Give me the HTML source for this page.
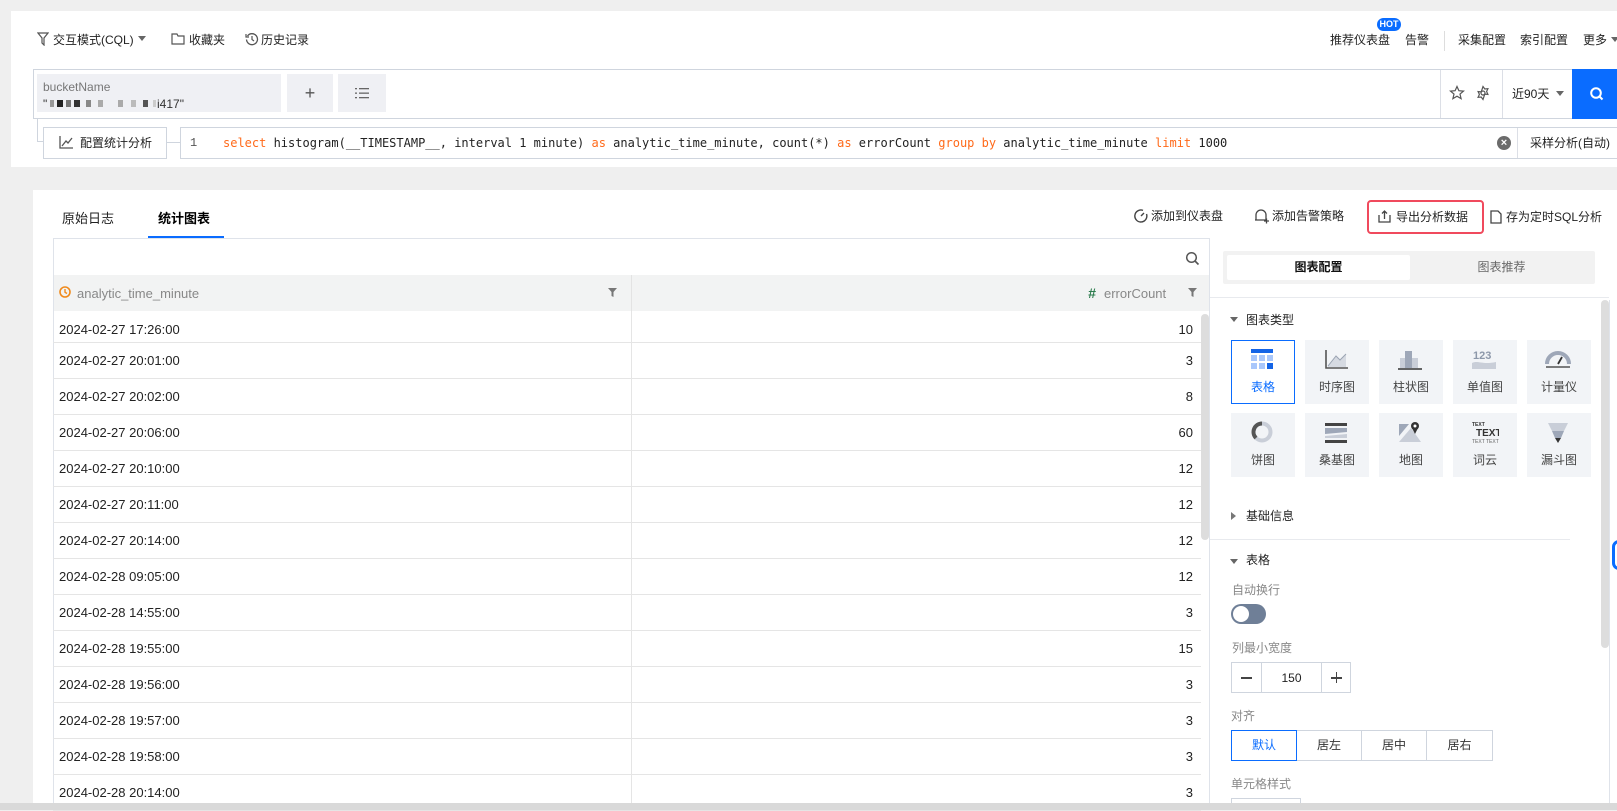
<!DOCTYPE html>
<html><head><meta charset="utf-8"><style>
*{box-sizing:border-box;margin:0;padding:0}
body{width:1617px;height:810px;overflow:hidden;background:#efefef;font-family:"Liberation Sans","Noto Sans CJK SC",sans-serif;font-size:12px;color:#333;position:relative}
.a{position:absolute}
.t{position:absolute;white-space:nowrap;line-height:16px}
.card{background:#fff;position:absolute}
.cell{position:absolute;width:64px;height:64px;background:#f2f4f7;text-align:center}
.cell .lb{position:absolute;left:0;right:0;top:38px;font-size:12px;color:#444}
.cell svg{position:absolute;left:16px;top:7px}
.row{position:absolute;left:53px;width:1148px;height:36px;border-bottom:1px solid #e5e5e5;font-size:13px;color:#222}
.row .d{position:absolute;left:6px;top:10px}
.row .v{position:absolute;right:8px;top:10px}
.row .s{position:absolute;left:578px;top:0;bottom:0;border-left:1px solid #e5e5e5}
</style></head><body>

<div class="card" style="left:11px;top:11px;width:1606px;height:156px"></div>
<svg class="a" style="left:37px;top:32px" width="12" height="14" viewBox="0 0 12 14"><path d="M1 1h10L7 6v7L5 11V6z" fill="none" stroke="#555" stroke-width="1.2"/></svg>
<div class="t" style="left:53px;top:32px;color:#222">交互模式(CQL)</div>
<svg class="a" style="left:138px;top:36px" width="8" height="6"><path d="M0 0h8L4 5z" fill="#666"/></svg>
<svg class="a" style="left:171px;top:33px" width="14" height="12"><path d="M1 1h5l1 2h6v8H1z" fill="none" stroke="#555" stroke-width="1.2"/></svg>
<div class="t" style="left:189px;top:32px;color:#222">收藏夹</div>
<svg class="a" style="left:245px;top:32px" width="14" height="14" viewBox="0 0 14 14"><path d="M2.5 4A5.5 5.5 0 1 1 1.5 7.5" fill="none" stroke="#555" stroke-width="1.3"/><path d="M1 2v3h3" fill="none" stroke="#555" stroke-width="1.2"/><path d="M7 4v3.5l2 1.5" fill="none" stroke="#555" stroke-width="1.2"/></svg>
<div class="t" style="left:261px;top:32px;color:#222">历史记录</div>

<div class="t" style="left:1330px;top:32px;color:#222">推荐仪表盘</div>
<div class="a" style="left:1377px;top:18px;width:24px;height:13px;border-radius:7px;background:#0a6cff;color:#fff;font-size:9px;line-height:13px;text-align:center;font-weight:bold">HOT</div>
<div class="t" style="left:1405px;top:32px;color:#222">告警</div>
<div class="a" style="left:1444px;top:31px;width:1px;height:20px;background:#ddd"></div>
<div class="t" style="left:1458px;top:32px;color:#222">采集配置</div>
<div class="t" style="left:1520px;top:32px;color:#222">索引配置</div>
<div class="t" style="left:1583px;top:32px;color:#222">更多</div>
<svg class="a" style="left:1611px;top:37px" width="8" height="6"><path d="M0 0h8L4 5z" fill="#666"/></svg>

<div class="a" style="left:33px;top:69px;width:1590px;height:50px;border:1px solid #cfd5de;background:#fff"></div>
<div class="a" style="left:37px;top:74px;width:244px;height:38px;background:#eff0f4"></div>
<div class="t" style="left:43px;top:79px;color:#777;font-size:12px">bucketName</div>
<div class="t" style="left:43px;top:96px;color:#333">"</div>
<div class="a" style="left:50px;top:100px;width:4px;height:7px;background:#999"></div>
<div class="a" style="left:57px;top:100px;width:6px;height:7px;background:#222"></div>
<div class="a" style="left:66px;top:100px;width:5px;height:7px;background:#777"></div>
<div class="a" style="left:74px;top:100px;width:6px;height:7px;background:#333"></div>
<div class="a" style="left:86px;top:100px;width:5px;height:7px;background:#888"></div>
<div class="a" style="left:98px;top:100px;width:5px;height:7px;background:#aaa"></div>
<div class="a" style="left:118px;top:100px;width:5px;height:7px;background:#aaa"></div>
<div class="a" style="left:131px;top:100px;width:5px;height:7px;background:#bbb"></div>
<div class="a" style="left:143px;top:100px;width:5px;height:7px;background:#555"></div>
<div class="a" style="left:153px;top:100px;width:3px;height:7px;background:#ccc"></div>
<div class="t" style="left:157px;top:96px;color:#333">i417"</div>
<div class="a" style="left:287px;top:74px;width:46px;height:38px;background:#eff0f4;text-align:center;line-height:38px;font-size:18px;color:#555">+</div>
<div class="a" style="left:338px;top:74px;width:48px;height:38px;background:#eff0f4"></div>
<svg class="a" style="left:355px;top:87px" width="14" height="12"><g fill="#666"><rect x="0" y="1" width="2" height="1.3"/><rect x="4" y="1" width="10" height="1.3"/><rect x="0" y="5.5" width="2" height="1.3"/><rect x="4" y="5.5" width="10" height="1.3"/><rect x="0" y="10" width="2" height="1.3"/><rect x="4" y="10" width="10" height="1.3"/></g></svg>
<div class="a" style="left:1440px;top:70px;width:1px;height:48px;background:#dcdfe6"></div>
<svg class="a" style="left:1449px;top:85px" width="16" height="16" viewBox="0 0 16 16"><path d="M8 1.5l1.9 4.2 4.6.4-3.5 3 1.1 4.5L8 11.2 3.9 13.6 5 9.1 1.5 6.1l4.6-.4z" fill="none" stroke="#555" stroke-width="1.2"/></svg>
<svg class="a" style="left:1475px;top:85px" width="16" height="16" viewBox="0 0 16 16"><path d="M8 1.5l1.8 2.5 3.1-.3-1.3 2.8 1.3 2.9-3.1-.3L8 14.5l-1.8-2.5-3.1.3 1.3-2.9-1.3-2.8 3.1.3z" fill="none" stroke="#555" stroke-width="1.2"/><circle cx="8" cy="8" r="2" fill="none" stroke="#555" stroke-width="1.2"/></svg>
<div class="a" style="left:1502px;top:70px;width:1px;height:48px;background:#dcdfe6"></div>
<div class="t" style="left:1512px;top:86px;color:#222">近90天</div>
<svg class="a" style="left:1556px;top:91px" width="8" height="6"><path d="M0 0h8L4 5z" fill="#666"/></svg>
<div class="a" style="left:1572px;top:69px;width:45px;height:50px;background:#0a6cff"></div>
<svg class="a" style="left:1589px;top:86px" width="16" height="16" viewBox="0 0 16 16"><circle cx="7" cy="7" r="4.8" fill="none" stroke="#fff" stroke-width="2"/><path d="M10.5 10.5l3 3" stroke="#fff" stroke-width="2"/></svg>

<div class="a" style="left:37px;top:119px;width:1px;height:22px;background:#cfd5de"></div>
<div class="a" style="left:37px;top:141px;width:6px;height:1px;background:#cfd5de"></div>
<div class="a" style="left:43px;top:127px;width:124px;height:32px;border:1px solid #cfd5de;background:#fff"></div>
<svg class="a" style="left:59px;top:136px" width="14" height="13"><path d="M1 0v12h13" fill="none" stroke="#555" stroke-width="1.3"/><path d="M3 10l4-5 2 2 4-5" fill="none" stroke="#555" stroke-width="1.3"/></svg>
<div class="t" style="left:80px;top:135px;color:#222">配置统计分析</div>
<div class="a" style="left:167px;top:142px;width:13px;height:1px;background:#cfd5de"></div>
<div class="a" style="left:180px;top:127px;width:1443px;height:32px;border:1px solid #cfd5de;background:#fff"></div>
<div class="t" style="left:190px;top:135px;color:#555;font-family:'Liberation Mono',monospace">1</div>
<div class="t" style="left:223px;top:135px;color:#222;font-family:'DejaVu Sans Mono','Liberation Mono',monospace;font-size:12px"><span style="color:#ff6a1a">select</span> histogram(__TIMESTAMP__, interval 1 minute) <span style="color:#ff6a1a">as</span> analytic_time_minute, count(*) <span style="color:#ff6a1a">as</span> errorCount <span style="color:#ff6a1a">group by</span> analytic_time_minute <span style="color:#ff6a1a">limit</span> 1000</div>
<div class="a" style="left:1497px;top:136px;width:14px;height:14px;border-radius:7px;background:#6b6b6b;color:#fff;font-size:11px;line-height:14px;text-align:center;font-weight:bold">×</div>
<div class="a" style="left:1517px;top:128px;width:1px;height:30px;background:#dcdfe6"></div>
<div class="t" style="left:1530px;top:135px;color:#222">采样分析(自动)</div>

<div class="card" style="left:33px;top:190px;width:1584px;height:613px"></div>
<div class="t" style="left:62px;top:211px;font-size:13px;color:#222">原始日志</div>
<div class="t" style="left:158px;top:211px;font-size:13px;color:#000;font-weight:bold">统计图表</div>
<div class="a" style="left:148px;top:236px;width:76px;height:2px;background:#0a6cff"></div>

<svg class="a" style="left:1134px;top:209px" width="14" height="14" viewBox="0 0 14 14"><path d="M12.5 5A6 6 0 1 1 9 1.4" fill="none" stroke="#444" stroke-width="1.4"/><path d="M7 7l3-3" stroke="#444" stroke-width="1.4"/></svg>
<div class="t" style="left:1151px;top:208px;color:#222">添加到仪表盘</div>
<svg class="a" style="left:1254px;top:208px" width="15" height="16" viewBox="0 0 15 16"><path d="M2 12V7a5 5 0 0 1 10 0v5H1" fill="none" stroke="#444" stroke-width="1.3"/><path d="M10 13h5M12.5 10.5v5" stroke="#444" stroke-width="1.3"/></svg>
<div class="t" style="left:1272px;top:208px;color:#222">添加告警策略</div>
<div class="a" style="left:1367px;top:200px;width:117px;height:34px;border:2px solid #f04a5d;border-radius:4px"></div>
<svg class="a" style="left:1378px;top:210px" width="13" height="13"><path d="M1 5v7h11V5M6.5 9V1M4 3.5l2.5-2.5 2.5 2.5" fill="none" stroke="#444" stroke-width="1.3"/></svg>
<div class="t" style="left:1396px;top:209px;color:#222">导出分析数据</div>
<svg class="a" style="left:1490px;top:210px" width="12" height="14"><path d="M1 1h7l3 3v9H1z" fill="none" stroke="#444" stroke-width="1.3"/></svg>
<div class="t" style="left:1506px;top:209px;color:#222">存为定时SQL分析</div>

<div class="a" style="left:53px;top:238px;width:1157px;height:572px;border:1px solid #dfe3ea;border-bottom:none"></div>
<div class="row" style="top:307px"><span class="s"></span><span class="d" style="top:15px">2024-02-27 17:26:00</span><span class="v" style="top:15px">10</span></div>
<div class="row" style="top:343px"><span class="s"></span><span class="d">2024-02-27 20:01:00</span><span class="v">3</span></div>
<div class="row" style="top:379px"><span class="s"></span><span class="d">2024-02-27 20:02:00</span><span class="v">8</span></div>
<div class="row" style="top:415px"><span class="s"></span><span class="d">2024-02-27 20:06:00</span><span class="v">60</span></div>
<div class="row" style="top:451px"><span class="s"></span><span class="d">2024-02-27 20:10:00</span><span class="v">12</span></div>
<div class="row" style="top:487px"><span class="s"></span><span class="d">2024-02-27 20:11:00</span><span class="v">12</span></div>
<div class="row" style="top:523px"><span class="s"></span><span class="d">2024-02-27 20:14:00</span><span class="v">12</span></div>
<div class="row" style="top:559px"><span class="s"></span><span class="d">2024-02-28 09:05:00</span><span class="v">12</span></div>
<div class="row" style="top:595px"><span class="s"></span><span class="d">2024-02-28 14:55:00</span><span class="v">3</span></div>
<div class="row" style="top:631px"><span class="s"></span><span class="d">2024-02-28 19:55:00</span><span class="v">15</span></div>
<div class="row" style="top:667px"><span class="s"></span><span class="d">2024-02-28 19:56:00</span><span class="v">3</span></div>
<div class="row" style="top:703px"><span class="s"></span><span class="d">2024-02-28 19:57:00</span><span class="v">3</span></div>
<div class="row" style="top:739px"><span class="s"></span><span class="d">2024-02-28 19:58:00</span><span class="v">3</span></div>
<div class="row" style="top:775px"><span class="s"></span><span class="d">2024-02-28 20:14:00</span><span class="v">3</span></div>
<div class="a" style="left:54px;top:239px;width:1155px;height:36px;background:#fff"></div>
<svg class="a" style="left:1185px;top:251px" width="15" height="15"><circle cx="6.5" cy="6.5" r="4.8" fill="none" stroke="#555" stroke-width="1.5"/><path d="M10 10l3.5 3.5" stroke="#555" stroke-width="1.6"/></svg>
<div class="a" style="left:54px;top:275px;width:1155px;height:36px;background:#f2f3f3"></div>
<div class="a" style="left:631px;top:275px;width:1px;height:36px;background:#e3e3e3"></div>
<svg class="a" style="left:59px;top:286px" width="12" height="12"><circle cx="6" cy="6" r="5" fill="none" stroke="#f08a1c" stroke-width="1.6"/><path d="M6 3v3.2l2 1.3" fill="none" stroke="#f08a1c" stroke-width="1.4"/></svg>
<div class="t" style="left:77px;top:286px;font-size:13px;color:#888">analytic_time_minute</div>
<svg class="a" style="left:608px;top:288px" width="9" height="9"><path d="M0 0h9L5.5 4v5L3.5 8V4z" fill="#777"/></svg>
<div class="t" style="left:1088px;top:285px;font-size:14px;color:#2e7d4f;font-weight:bold;font-style:italic">#</div>
<div class="t" style="left:1104px;top:286px;font-size:13px;color:#888">errorCount</div>
<svg class="a" style="left:1188px;top:288px" width="9" height="9"><path d="M0 0h9L5.5 4v5L3.5 8V4z" fill="#777"/></svg>
<div class="a" style="left:1201px;top:314px;width:8px;height:226px;background:#ddd;border-radius:4px"></div>

<div class="a" style="left:1209px;top:238px;width:1px;height:572px;background:#dfe3ea"></div>
<div class="a" style="left:1609px;top:300px;width:1px;height:510px;background:#dfe3ea"></div>
<div class="a" style="left:1223px;top:251px;width:372px;height:33px;background:#f2f2f2;border-radius:2px"></div>
<div class="a" style="left:1227px;top:255px;width:183px;height:25px;background:#fff;border-radius:2px;text-align:center;line-height:25px;font-weight:bold;color:#111">图表配置</div>
<div class="a" style="left:1410px;top:255px;width:183px;height:25px;text-align:center;line-height:25px;color:#666">图表推荐</div>
<div class="a" style="left:1210px;top:297px;width:399px;height:1px;background:#e8eaee"></div>
<div class="a" style="left:1601px;top:300px;width:8px;height:348px;background:#ddd;border-radius:4px"></div>
<svg class="a" style="left:1230px;top:317px" width="8" height="6"><path d="M0 0h8L4 5z" fill="#666"/></svg>
<div class="t" style="left:1246px;top:312px;color:#222">图表类型</div>

<div class="cell" style="left:1231px;top:340px;background:#fff;border:1px solid #0a6cff"><svg width="30" height="26" style="left:15px;top:6px"><rect x="4" y="2" width="22" height="4" fill="#1464e6"/><g fill="#a9c7fb"><rect x="4" y="8" width="6" height="6"/><rect x="12" y="8" width="6" height="6"/><rect x="20" y="8" width="6" height="6"/><rect x="4" y="16" width="6" height="6"/><rect x="12" y="16" width="6" height="6"/></g><rect x="20" y="16" width="6" height="6" fill="#1464e6"/></svg><div class="lb" style="top:37px;color:#0a6cff">表格</div></div>
<div class="cell" style="left:1305px;top:340px"><svg width="30" height="26"><path d="M5 3v18h22" fill="none" stroke="#555" stroke-width="1.6"/><path d="M7 19l8-10 4 4 6-6v13H7z" fill="#d6dae2"/><path d="M7 19l8-10 4 4 6-6" fill="none" stroke="#9aa3b2" stroke-width="1"/></svg><div class="lb">时序图</div></div>
<div class="cell" style="left:1379px;top:340px"><svg width="30" height="26"><rect x="10" y="4" width="7" height="17" fill="#9ea7b8"/><rect x="5" y="11" width="5" height="10" fill="#c9ced8"/><rect x="17" y="11" width="6" height="10" fill="#c9ced8"/><path d="M3 22h24" stroke="#333" stroke-width="1.6"/></svg><div class="lb">柱状图</div></div>
<div class="cell" style="left:1453px;top:340px"><svg width="30" height="26"><text x="4" y="12" font-family="Liberation Sans" font-size="11" font-weight="bold" fill="#8d98aa">123</text><path d="M3 16c6-3 10 2 24-1v7H3z" fill="#c9ced8"/></svg><div class="lb">单值图</div></div>
<div class="cell" style="left:1527px;top:340px"><svg width="30" height="26"><path d="M4 17a11 11 0 0 1 22 0" fill="none" stroke="#9ea7b8" stroke-width="4"/><path d="M15 17l4-7" stroke="#333" stroke-width="1.8"/><path d="M3 20h24" stroke="#333" stroke-width="1.3"/></svg><div class="lb">计量仪</div></div>

<div class="cell" style="left:1231px;top:413px"><svg width="30" height="26"><circle cx="15" cy="12" r="8.5" fill="none" stroke="#c9ced8" stroke-width="4"/><path d="M15 3.5a8.5 8.5 0 0 0-6 14.5" fill="none" stroke="#555" stroke-width="4"/></svg><div class="lb">饼图</div></div>
<div class="cell" style="left:1305px;top:413px"><svg width="30" height="26"><rect x="4" y="3" width="22" height="3" fill="#444"/><path d="M4 8h22v4L4 14z" fill="#9ea7b8"/><path d="M4 16l22-2v4H4z" fill="#c9ced8"/><rect x="4" y="20" width="22" height="3" fill="#444"/></svg><div class="lb">桑基图</div></div>
<div class="cell" style="left:1379px;top:413px"><svg width="30" height="26"><path d="M4 4h10l-10 12z" fill="#9ea7b8"/><path d="M4 22l12-14 10 14z" fill="#c9ced8"/><circle cx="20" cy="6" r="4" fill="#333"/><path d="M17 8l3 6 3-6" fill="#333"/><circle cx="20" cy="6" r="1.5" fill="#fff"/></svg><div class="lb">地图</div></div>
<div class="cell" style="left:1453px;top:413px"><svg width="30" height="26"><text x="3" y="6" font-family="Liberation Sans" font-size="5" font-weight="bold" fill="#333">TEXT</text><text x="7" y="16" font-family="Liberation Sans" font-size="10" font-weight="bold" fill="#333">TEXT</text><text x="3" y="23" font-family="Liberation Sans" font-size="5" fill="#666">TEXT TEXT</text></svg><div class="lb">词云</div></div>
<div class="cell" style="left:1527px;top:413px"><svg width="30" height="26"><path d="M5 3h20l-4 8H9z" fill="#c9ced8"/><path d="M9 11h12l-3 7h-6z" fill="#9ea7b8"/><path d="M12 18h6l-3 5z" fill="#333"/></svg><div class="lb">漏斗图</div></div>

<svg class="a" style="left:1231px;top:512px" width="6" height="8"><path d="M0 0v8l5-4z" fill="#777"/></svg>
<div class="t" style="left:1246px;top:508px;color:#222">基础信息</div>
<div class="a" style="left:1210px;top:539px;width:360px;height:1px;background:#e8eaee"></div>
<svg class="a" style="left:1230px;top:559px" width="8" height="6"><path d="M0 0h8L4 5z" fill="#666"/></svg>
<div class="t" style="left:1246px;top:552px;color:#222">表格</div>
<div class="t" style="left:1232px;top:582px;color:#888">自动换行</div>
<div class="a" style="left:1231px;top:604px;width:35px;height:20px;border-radius:10px;background:#6f7f97"></div>
<div class="a" style="left:1233px;top:606px;width:16px;height:16px;border-radius:8px;background:#fff"></div>
<div class="t" style="left:1232px;top:640px;color:#888">列最小宽度</div>
<div class="a" style="left:1231px;top:662px;width:120px;height:31px;border:1px solid #cfd5de"></div>
<div class="a" style="left:1261px;top:662px;width:1px;height:31px;background:#cfd5de"></div>
<div class="a" style="left:1321px;top:662px;width:1px;height:31px;background:#cfd5de"></div>
<div class="a" style="left:1241px;top:677px;width:11px;height:1.5px;background:#444"></div>
<div class="t" style="left:1262px;top:670px;width:59px;text-align:center;color:#222">150</div>
<div class="a" style="left:1331px;top:677px;width:11px;height:1.5px;background:#444"></div>
<div class="a" style="left:1335.7px;top:672px;width:1.5px;height:11px;background:#444"></div>
<div class="t" style="left:1231px;top:708px;color:#888">对齐</div>
<div class="a" style="left:1231px;top:730px;width:262px;height:31px;border:1px solid #cfd5de"></div>
<div class="a" style="left:1231px;top:730px;width:66px;height:31px;border:1px solid #0a6cff;color:#0a6cff;text-align:center;line-height:29px">默认</div>
<div class="a" style="left:1297px;top:731px;width:65px;height:29px;border-right:1px solid #cfd5de;text-align:center;line-height:29px;color:#333">居左</div>
<div class="a" style="left:1362px;top:731px;width:65px;height:29px;border-right:1px solid #cfd5de;text-align:center;line-height:29px;color:#333">居中</div>
<div class="a" style="left:1427px;top:731px;width:65px;height:29px;text-align:center;line-height:29px;color:#333">居右</div>
<div class="t" style="left:1231px;top:776px;color:#888">单元格样式</div>
<div class="a" style="left:1231px;top:798px;width:70px;height:12px;border:1px solid #cfd5de;border-bottom:none"></div>
<div class="a" style="left:1612px;top:540px;width:14px;height:30px;border-radius:7px;border:3px solid #0a6cff"></div>

<div class="a" style="left:0;top:803px;width:1617px;height:7px;background:#d9d9d9"></div>
</body></html>
